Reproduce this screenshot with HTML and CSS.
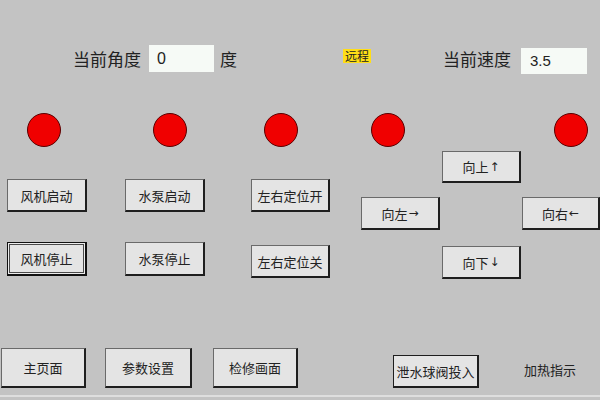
FILE: index.html
```html
<!DOCTYPE html>
<html lang="zh">
<head>
<meta charset="utf-8">
<title>HMI</title>
<link rel="stylesheet" href="styles.css">
</head>
<body>
<div class="screen">
  <div class="header">
    <span class="lbl lbl-angle">当前角度</span>
    <span class="field field-angle">0</span>
    <span class="lbl unit">度</span>
    <span class="remote">远程</span>
    <span class="lbl lbl-speed">当前速度</span>
    <span class="field field-speed">3.5</span>
  </div>

  <div class="lamps">
    <span class="lamp l1"></span>
    <span class="lamp l2"></span>
    <span class="lamp l3"></span>
    <span class="lamp l4"></span>
    <span class="lamp l5"></span>
  </div>

  <div class="controls">
    <div class="col c1">
      <div class="btn">风机启动</div>
      <div class="btn focus b-stop">风机停止</div>
    </div>
    <div class="col c2">
      <div class="btn">水泵启动</div>
      <div class="btn b-stop">水泵停止</div>
    </div>
    <div class="col c3">
      <div class="btn">左右定位开</div>
      <div class="btn b-off">左右定位关</div>
    </div>
    <div class="col c4">
      <div class="btn">向左<span class="arr">→</span></div>
    </div>
    <div class="col c5">
      <div class="btn">向上 <span class="arr">↑</span></div>
      <div class="btn b-down">向下 <span class="arr">↓</span></div>
    </div>
    <div class="col c6">
      <div class="btn">向右<span class="arr">←</span></div>
    </div>
  </div>

  <div class="footer">
    <div class="btn big b-home">主页面</div>
    <div class="btn big b-param">参数设置</div>
    <div class="btn big b-service">检修画面</div>
    <div class="btn valve">泄水球阀投入</div>
    <span class="heat">加热指示</span>
  </div>
  <div class="baseline"></div>
</div>
</body>
</html>
```

FILE: styles.css
```css
* { box-sizing: border-box; }
html, body {
  margin: 0;
  padding: 0;
  background: #c3c3c3;
}
.screen {
  width: 600px;
  height: 400px;
  overflow: hidden;
  background: #c3c3c3;
  font-family: "Noto Sans CJK SC", "Noto Sans", sans-serif;
  color: #222;
}

/* header */
.header {
  display: flex;
  align-items: center;
  height: 73px;
  padding-top: 44px;
}
.lbl {
  font-size: 17px;
  line-height: 29px;
  color: #222;
}
.lbl-angle { margin-left: 73px; width: 76px; }
.field {
  display: block;
  height: 27px;
  background: #f6faf6;
  font-family: "Liberation Sans", Arial, sans-serif;
  line-height: 27px;
  color: #222;
}
.field-angle { width: 65px; padding-left: 8px; font-size: 16px; }
.unit { margin-left: 6px; width: 123px; }
.remote {
  width: 28px;
  font-size: 12px;
  line-height: 14px;
  background: #ffde17;
  color: #222;
  text-align: center;
  margin-top: -6px;
}
.lbl-speed { margin-left: 72px; width: 78px; }
.field-speed {
  width: 66px;
  height: 26px;
  margin-top: 5px;
  padding-left: 9px;
  font-size: 15px;
  line-height: 26px;
}

/* lamps */
.lamps {
  display: flex;
  height: 34px;
  margin-top: 40px;
}
.lamp {
  display: block;
  width: 34px;
  height: 34px;
  border-radius: 50%;
  background: #f00000;
  border: 1px solid #5a0000;
}
.l1 { margin-left: 27px; }
.l2 { margin-left: 92px; }
.l3 { margin-left: 77px; }
.l4 { margin-left: 73px; }
.l5 { margin-left: 149px; }

/* buttons */
.btn {
  display: flex;
  align-items: center;
  justify-content: center;
  width: 80px;
  height: 33px;
  background: #e4e4e4;
  border-top: 1px solid #6a6a6a;
  border-left: 1px solid #6a6a6a;
  border-right: 2px solid #1e1e1e;
  border-bottom: 2px solid #1e1e1e;
  font-size: 13px;
  color: #222;
  white-space: nowrap;
}
.arr {
  font-family: "DejaVu Sans", sans-serif;
  font-size: 12px;
  margin-left: 1px;
}
.btn.focus {
  border: 1px solid #111;
  border-right-width: 2px;
  border-bottom-width: 2px;
  box-shadow: inset 0 0 0 1px #ececec, inset 0 0 0 2px #4a4a4a;
}

.controls {
  display: flex;
  height: 201px;
}
.col {
  display: flex;
  flex-direction: column;
}
.c1 { margin-left: 7px; padding-top: 32px; }
.c2 { margin-left: 38px; padding-top: 32px; }
.c3 { margin-left: 46px; padding-top: 32px; }
.c3 .btn { width: 79px; }
.c4 { margin-left: 31px; padding-top: 50px; }
.c4 .btn { width: 79px; }
.c5 { margin-left: 2px; padding-top: 4px; }
.c5 .btn { width: 79px; height: 32px; }
.c6 { margin-left: 1px; padding-top: 50px; }
.c6 .btn { width: 78px; }

.b-stop { margin-top: 30px; height: 34px; }
.b-off { margin-top: 33px; }
.c5 .b-down { margin-top: 63px; height: 33px; }

/* footer */
.footer {
  display: flex;
  align-items: flex-end;
  height: 40px;
}
.big { height: 40px; width: 86px; }
.b-home { margin-left: 1px; width: 85px; }
.b-param { margin-left: 19px; width: 87px; }
.b-service { margin-left: 21px; width: 85px; }
.valve {
  margin-left: 95px;
  width: 86px;
  height: 33px;
  border: 1px solid #1e1e1e;
  border-right-width: 2px;
  border-bottom-width: 2px;
}
.heat {
  margin-left: 45px;
  font-size: 13px;
  line-height: 18px;
  align-self: center;
  margin-top: 4px;
  color: #222;
}
.baseline {
  height: 2px;
  margin-top: 7px;
  background: #dedede;
}
```
